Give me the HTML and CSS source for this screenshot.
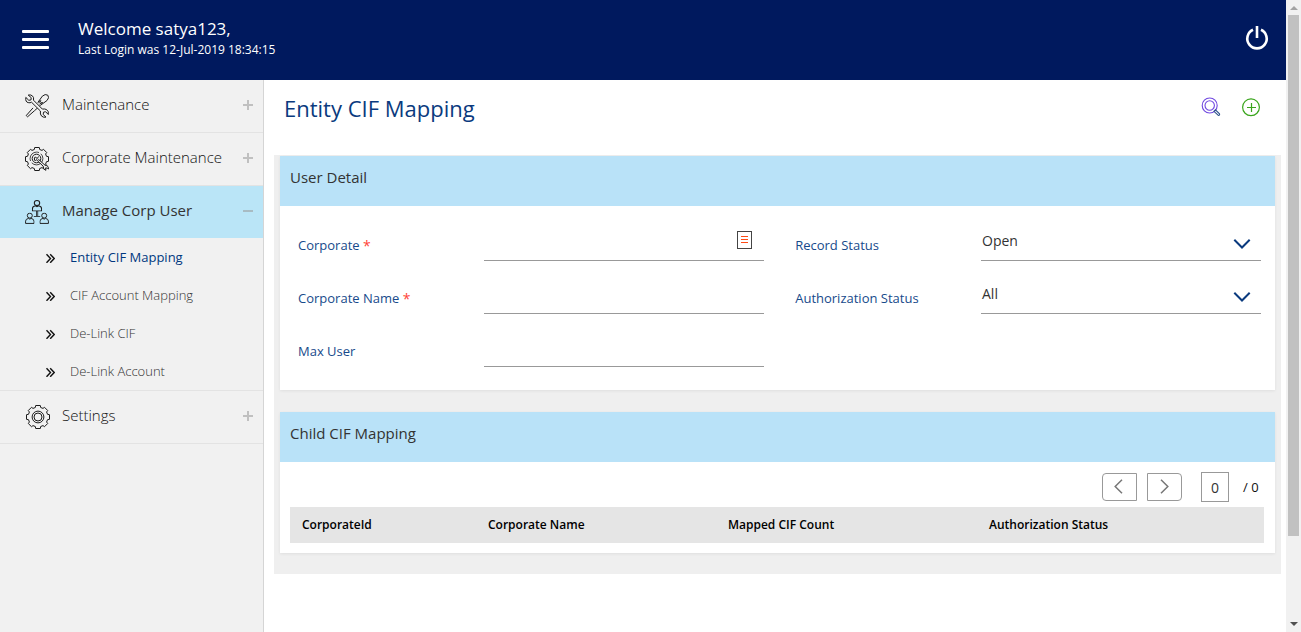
FILE: index.html
```html
<!DOCTYPE html>
<html lang="en">
<head>
<meta charset="utf-8">
<title>Entity CIF Mapping</title>
<link rel="stylesheet" href="styles.css">
</head>
<body>
<svg class="defs" width="0" height="0">
  <symbol id="gear" viewBox="-12 -12 24 24">
    <path d="M11.500-2.300V2.300L9.500 2.700L8.600 5L9.700 6.500L6.500 9.700L5 8.600L2.700 9.500L2.300 11.500H-2.300L-2.700 9.500L-5 8.600L-6.500 9.700L-9.700 6.500L-8.600 5L-9.500 2.700L-11.500 2.300V-2.300L-9.500-2.700L-8.600-5L-9.700-6.500L-6.500-9.700L-5-8.600L-2.700-9.500L-2.300-11.500H2.300L2.700-9.500L5-8.600L6.500-9.700L9.700-6.500L8.600-5L9.500-2.700Z"/>
  </symbol>
  <symbol id="person" viewBox="0 0 10 12" preserveAspectRatio="none">
    <circle cx="5" cy="3.200" r="2.600"/>
    <path d="M.6 11.400V9Q.7 6.600 3.700 6.100L5 6.900L6.300 6.100Q9.300 6.600 9.400 9V11.400Z"/>
  </symbol>
</svg>
<div class="window">
  <div class="app">
    <header class="topbar">
      <button class="burger" aria-label="Menu"><span></span><span></span><span></span></button>
      <div class="greeting">
        <div class="welcome">Welcome satya123,</div>
        <div class="last-login">Last Login was 12-Jul-2019 18:34:15</div>
      </div>
      <svg class="power" viewBox="0 0 24 26">
        <path d="M8 4.800A9.700 9.700 0 1 0 16 4.800" />
        <path d="M12 1V13"/>
      </svg>
    </header>
    <div class="body">
      <nav class="sidebar">
        <div class="item">
          <svg class="item-icon" viewBox="0 0 24 24">
            <path d="M12.800 8.600L17.300 2.200Q20.300-.6 22.800 1.200Q24.800 3.500 22 6.500L15.600 11.200L9.400 16.800L4 21.500L2.600 22.800L1.200 21.500L2.600 20L8 13.900"/>
            <path d="M13.500 9.200L16 6.200M14.500 10.200L17.800 8.300M14.500 6.800L17.200 9.600"/>
            <path class="fill" d="M3.200 1.100L6.200 3.600L6 5.900L3.800 6.300L.8 3.400Q.2 8.100 3.200 8.600Q5.200 9.200 6.500 8.200L15.400 17Q14.800 20.400 16.700 22.200Q18.700 23.800 21 23.100L18.200 20.500L18.500 18.200L20.600 17.700L23.300 20.500Q24 17.200 21.600 15.600Q19.700 14.600 17.400 15.100L8.500 6.200Q9.200 3.300 7.300 1.800Q5.500.4 3.200 1.100Z"/>
          </svg>
          <span class="item-label">Maintenance</span><span class="toggle plus"></span>
        </div>
        <div class="item">
          <svg class="item-icon" viewBox="0 0 24 24">
            <use href="#gear" x="0" y="0" width="24" height="24"/>
            <circle cx="11.500" cy="11.500" r="6.400" stroke-dasharray="15 2" stroke-width=".8"/>
            <circle cx="11.500" cy="11.500" r="4.300"/>
            <path d="M9.500 13.500Q9 10 10.200 10L12.300 11.500L13.500 9.500M10.200 13.600L12.100 12.500"/>
            <path class="fill" d="M13.600 12.500L12.500 13.800L18.200 19.200Q18 22.800 20.900 23.300L20.600 20.900L22.200 21.100L23.400 22Q24 18.800 20 18.200Z"/>
          </svg>
          <span class="item-label">Corporate Maintenance</span><span class="toggle plus"></span>
        </div>
        <div class="item active">
          <svg class="item-icon" viewBox="0 0 24 24">
            <use href="#person" x="6.800" y="0" width="10.400" height="11.500"/>
            <use href="#person" x="0" y="12.600" width="9.600" height="11.400"/>
            <use href="#person" x="14.400" y="12.600" width="9.600" height="11.400"/>
            <path stroke-width=".8" d="M11.500 11V16M12.700 11V16M8.800 16.500H15.200"/>
          </svg>
          <span class="item-label">Manage Corp User</span><span class="toggle"></span>
        </div>
        <div class="submenu">
          <a class="sub current"><svg class="chev" viewBox="0 0 10 10"><path d="M1.500 1.200L5.500 5.500L1.500 9.800M5.200 1.200L9.200 5.500L5.200 9.800"/></svg>Entity CIF Mapping</a>
          <a class="sub"><svg class="chev" viewBox="0 0 10 10"><path d="M1.500 1.200L5.500 5.500L1.500 9.800M5.200 1.200L9.200 5.500L5.200 9.800"/></svg>CIF Account Mapping</a>
          <a class="sub"><svg class="chev" viewBox="0 0 10 10"><path d="M1.500 1.200L5.500 5.500L1.500 9.800M5.200 1.200L9.200 5.500L5.200 9.800"/></svg>De-Link CIF</a>
          <a class="sub"><svg class="chev" viewBox="0 0 10 10"><path d="M1.500 1.200L5.500 5.500L1.500 9.800M5.200 1.200L9.200 5.500L5.200 9.800"/></svg>De-Link Account</a>
        </div>
        <div class="item settings">
          <svg class="item-icon" viewBox="0 0 24 24">
            <use href="#gear" width="24" height="24"/>
            <circle cx="12" cy="12" r="5.900"/><circle cx="12" cy="12" r="4"/>
          </svg>
          <span class="item-label">Settings</span><span class="toggle plus"></span>
        </div>
      </nav>
      <main class="content">
        <div class="title-row">
          <h1>Entity CIF Mapping</h1>
          <svg class="action" viewBox="0 0 20 20">
            <g stroke="#7048e0" stroke-width="1.100"><circle cx="8.700" cy="8.500" r="7.500"/><circle cx="8.700" cy="8.500" r="4.700"/></g>
            <path stroke="#30548c" stroke-width="1.100" d="M12.900 14.300L14.400 12.800L18.500 16.800Q19 18.300 17.400 18.500Z"/>
          </svg>
          <svg class="action" viewBox="0 0 20 20">
            <g stroke="#3aa51c"><circle cx="10" cy="10.300" r="8.400"/><path d="M10.500 6V15M6 10.500H15"/></g>
          </svg>
        </div>
        <div class="workspace">
          <section class="panel">
            <h2>User Detail</h2>
            <div class="form">
              <label>Corporate <b>*</b></label>
              <div class="field"><span class="picker"><i></i><i></i><i></i></span></div>
              <label>Record Status</label>
              <div class="field">Open<svg class="drop" viewBox="0 0 18 11"><path d="M1.300 1.800L9 9.500L16.700 1.800"/></svg></div>
              <label>Corporate Name <b>*</b></label>
              <div class="field"></div>
              <label>Authorization Status</label>
              <div class="field">All<svg class="drop" viewBox="0 0 18 11"><path d="M1.300 1.800L9 9.500L16.700 1.800"/></svg></div>
              <label>Max User</label>
              <div class="field"></div>
            </div>
          </section>
          <section class="panel">
            <h2>Child CIF Mapping</h2>
            <div class="pager">
              <button class="prev" aria-label="Previous"><svg viewBox="0 0 9 15"><path d="M8 .8L1.200 7.500L8 14.200"/></svg></button>
              <button class="next" aria-label="Next"><svg viewBox="0 0 9 15"><path d="M1 .8L7.800 7.500L1 14.200"/></svg></button>
              <span class="page">0</span>
              <span class="total">/ 0</span>
            </div>
            <div class="table-head">
              <span>CorporateId</span><span>Corporate Name</span><span>Mapped CIF Count</span><span>Authorization Status</span>
            </div>
          </section>
        </div>
      </main>
    </div>
  </div>
  <div class="scrollbar"><span class="arrow up"></span><span class="thumb"></span><span class="arrow down"></span></div>
</div>
</body>
</html>
```
FILE: styles.css
```css
* { box-sizing: border-box; }
body { margin: 0; font-family: "Open Sans", sans-serif; background: #fff; overflow: hidden; }
svg { fill: none; display: block; flex: none; }
button { padding: 0; background: none; }
.defs { position: absolute; }
.window { display: flex; width: 1301px; height: 632px; }
.app { width: 1286px; display: flex; flex-direction: column; }

.topbar { height: 80px; background: #00195e; color: #fff; display: flex; padding: 0 17px 0 22px; }
.burger { width: 27px; height: 19px; margin-top: 30px; border: 0; display: flex; flex-direction: column; justify-content: space-between; }
.burger span { height: 3px; width: 27px; background: #fff; border-radius: 1px; }
.greeting { margin-left: 29px; padding-top: 17px; flex: 1; }
.welcome { font-size: 17px; line-height: 23px; }
.last-login { font-size: 12px; line-height: 20px; }
.power { width: 24px; height: 26px; margin: 25px 0 0; stroke: #fff; stroke-width: 2.6; }

.body { display: flex; flex: 1; }
.sidebar { width: 264px; background: #f1f1f1; border-right: 1px solid #d5d5d5; }
.item { height: 53px; border-bottom: 1px solid #e3e3e3; display: flex; align-items: center; padding: 0 10px 0 25px; color: #111; font-size: 15px; font-weight: 300; }
.item-icon { width: 24px; height: 24px; stroke: #1b1b1b; stroke-width: 1; }
.fill { fill: #f1f1f1; }
.item-label { flex: 1; margin-left: 13px; line-height: 20px; padding-bottom: 5px; }
.active { height: 52px; background: #bae5f7; border: 0; color: #333; font-weight: 400; }
.settings .item-icon { margin-left: 1px; margin-right: -1px; }
.toggle { width: 10px; height: 10px; background: linear-gradient(#999, #999) 0 4px / 10px 2px no-repeat; opacity: .55; margin-bottom: 2px; }
.plus { background: linear-gradient(#999, #999) 0 4px / 10px 2px no-repeat, linear-gradient(#999, #999) 4px 0 / 2px 10px no-repeat; }
.submenu { border-bottom: 1px solid #e3e3e3; height: 153px; }
.sub { display: flex; align-items: center; height: 38px; padding-left: 45px; font-size: 13px; font-weight: 300; color: #333; }
.sub.current { color: #00387f; font-weight: 400; }
.chev { width: 10px; height: 10px; margin: 2px 15px 0 0; stroke: #111; stroke-width: 1.4; }

.content { flex: 1; padding: 0 5px 0 10px; }
.title-row { height: 75px; display: flex; padding: 17px 20px 0 10px; }
h1 { margin: -6px 0 0; flex: 1; font-size: 22px; line-height: 34px; font-weight: 400; color: #0a3a7e; }
.action { width: 20px; height: 20px; margin-left: 20px; stroke-width: 1.2; }
.workspace { height: 419px; background: #efefef; padding: 1px 6px 0; }
.panel { background: #fff; margin-bottom: 22px; box-shadow: 0 1px 3px rgba(0,0,0,.07); }
h2 { margin: 0; height: 50px; padding: 10px 10px 0; background: #b9e2f8; color: #333; font-size: 15px; line-height: 22px; font-weight: 400; }
.form { height: 184px; padding: 23px 14px 0 18px; display: grid; grid-template-columns: 186px 280px 217px 280px; grid-template-rows: 32px 32px 32px; row-gap: 21px; }
label { font-size: 13px; line-height: 18px; padding-top: 7px; color: #174a8b; }
.field + label { padding-left: 31.2px; }
.form label:nth-of-type(odd) { padding-left: 0; }
label b { color: #ff4438; font-weight: 400; font-size: 14px; line-height: 16px; position: relative; top: 1px; }
.field { border-bottom: 1px solid #999; font-size: 14px; line-height: 20px; color: #333; padding: 2px 9px 0 1px; display: flex; justify-content: space-between; }
.drop { width: 18px; height: 11px; margin: 7px 1px 0; stroke: #0a3a7e; stroke-width: 2; }
.picker { width: 15px; height: 18px; border: 1px solid #444; margin: 0 3px 0 auto; padding: 4px 3px 0; }
.picker i { display: block; height: 1px; background: #ff4b16; margin-bottom: 2px; }

.pager { height: 45px; display: flex; padding: 10px 0 0 822px; }
.pager button { width: 35px; height: 28px; margin: 1px 10px 0 0; border: 1px solid #999; display: flex; justify-content: center; padding: 5px 3px 0 0; }
.pager .prev { border-radius: 4px 0 0 4px; }
.pager .next { border-radius: 0 4px 4px 0; margin-right: 19px; padding-right: 0; }
.pager svg { width: 9px; height: 15px; stroke: #777; stroke-width: 1.5; }
.page { width: 28px; height: 30px; border: 1px solid #999; font-size: 14px; line-height: 29px; text-align: center; color: #333; }
.total { margin-left: 14px; font-size: 13px; line-height: 30px; color: #111; }
.table-head { height: 36px; margin: 0 11px 0 10px; padding-left: 12px; background: #e5e5e5; display: grid; grid-template-columns: 186px 240px 261px 1fr; font-size: 12px; line-height: 35px; font-weight: 600; color: #000; }
.panel:last-child { padding-bottom: 10px; }

.scrollbar { width: 15px; background: #f1f1f1; display: flex; flex-direction: column; align-items: center; }
.arrow { width: 0; height: 0; border: 4px solid transparent; }
.up { border-top: 0; border-bottom-color: #a3a3a3; margin: 6px 0 5px; }
.thumb { width: 11px; height: 521px; background: #c1c1c1; }
.down { border-bottom: 0; border-top-color: #505050; margin: auto 0 6px; }
```
